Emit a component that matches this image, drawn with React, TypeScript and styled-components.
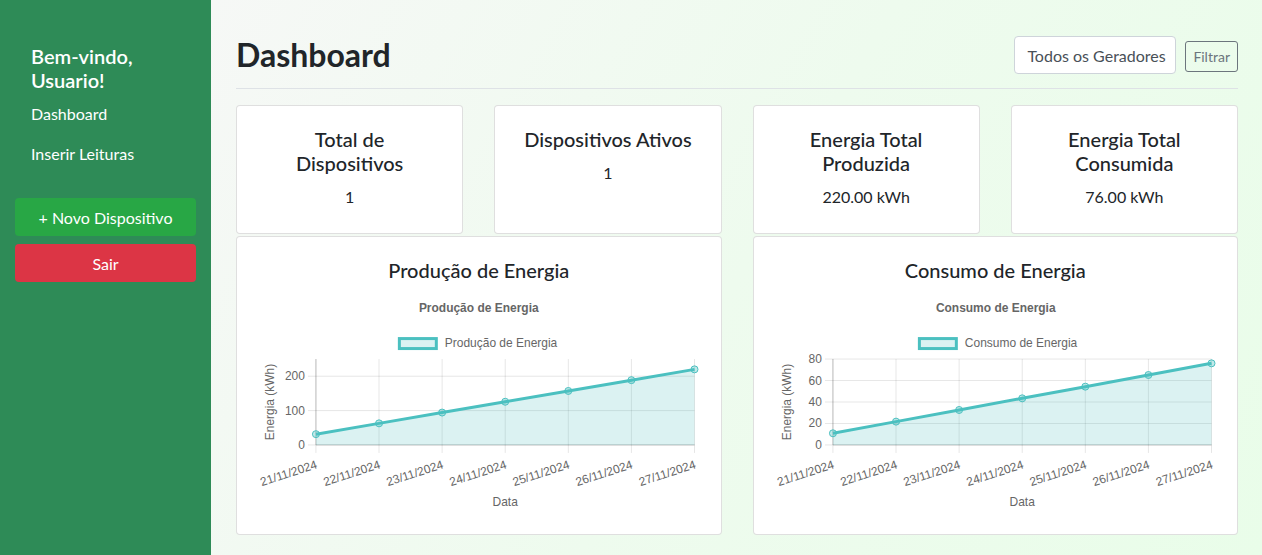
import React from "react";
import styled, { createGlobalStyle } from "styled-components";

const Global = createGlobalStyle`
  html, body { margin: 0; padding: 0; }
  body { font-family: Lato, "Noto Sans", sans-serif; color: #212529; }
  * { box-sizing: border-box; }
`;

const Layout = styled.div`
  display: flex;
  min-height: 100vh;
`;

const Sidebar = styled.aside`
  width: 211px;
  flex-shrink: 0;
  background: #2e8b57;
  padding: 44px 15px 20px;
  color: #fff;
`;

const Welcome = styled.h4`
  margin: 0 0 2px;
  padding: 0 16px;
  font-size: 20px;
  font-weight: 600;
  line-height: 24px;
`;

const Nav = styled.nav`
  display: flex;
  flex-direction: column;
  margin-bottom: 24px;
`;

const NavLink = styled.a`
  display: block;
  padding: 8px 16px;
  font-size: 16px;
  line-height: 24px;
  color: #fff;
  text-decoration: none;
`;

const SideButton = styled.button<{ $variant: "success" | "danger" }>`
  display: block;
  width: 100%;
  height: 38px;
  margin-bottom: 8px;
  border: none;
  border-radius: 4px;
  font-family: inherit;
  font-size: 16px;
  color: #fff;
  background: ${(p) => (p.$variant === "success" ? "#28a745" : "#dc3545")};
`;

const Main = styled.main`
  flex: 1;
  padding: 0 24px 20px 25px;
  background: linear-gradient(120deg, #f6f8f6 0%, #eefbee 50%, #e9fde9 100%);
`;

const Header = styled.header`
  display: flex;
  justify-content: space-between;
  align-items: center;
  padding: 36px 0 14px;
  border-bottom: 1px solid #dee2e6;
  margin-bottom: 16px;
`;

const Title = styled.h2`
  margin: 0;
  font-size: 32px;
  line-height: 38px;
  font-weight: 700;
`;

const Tools = styled.div`
  display: flex;
  align-items: center;
  gap: 9px;
`;

const Select = styled.div`
  width: 162px;
  height: 38px;
  padding: 0 12px;
  display: flex;
  align-items: center;
  background: #fff;
  border: 1px solid #ced4da;
  border-radius: 4px;
  font-size: 16px;
  color: #495057;
  white-space: nowrap;
`;

const OutlineButton = styled.button`
  height: 31px;
  padding: 0 7px;
  border: 1px solid #6c757d;
  border-radius: 3px;
  background: transparent;
  color: #6c757d;
  font-family: inherit;
  font-size: 14px;
  margin-top: 2px;
`;

const Grid = styled.div<{ $cols: number }>`
  display: grid;
  grid-template-columns: repeat(${(p) => p.$cols}, 1fr);
  column-gap: 31px;
  margin-bottom: 2px;
`;

const Card = styled.div<{ $padX: number; $padBottom: number }>`
  background: #fff;
  border: 1px solid rgba(0, 0, 0, 0.125);
  border-radius: 4px;
  padding: 21px ${(p) => p.$padX}px ${(p) => p.$padBottom}px;
  text-align: center;
`;

const CardTitle = styled.h5`
  margin: 0 0 10px;
  font-size: 20px;
  line-height: 24px;
  font-weight: 500;
`;

const CardValue = styled.p`
  margin: 0;
  font-size: 16px;
  line-height: 24px;
`;

const ChartSvg = styled.svg`
  display: block;
  width: 100%;
  height: 216px;
  margin-top: 12px;
  font-family: "Liberation Sans", Arial, sans-serif;
`;

const labels = [
  "21/11/2024",
  "22/11/2024",
  "23/11/2024",
  "24/11/2024",
  "25/11/2024",
  "26/11/2024",
  "27/11/2024",
];

type ChartProps = {
  title: string;
  values: number[];
  max: number;
  ticks: number[];
};

function LineChart({ title, values, max, ticks }: ChartProps) {
  const W = 444;
  const left = 59;
  const right = W - 6;
  const top = 65;
  const bottom = 151;
  const cx = W / 2;
  const plotCx = (left + right) / 2;
  const step = (right - left) / (labels.length - 1);
  const xs = labels.map((_, i) => left + i * step);
  const y = (v: number) => bottom - (v / max) * (bottom - top);
  const pts = values.map((v, i) => `${xs[i]},${y(v)}`).join(" ");
  const area = `${left},${bottom} ${pts} ${xs[xs.length - 1]},${bottom}`;
  const grid = "rgba(0,0,0,0.1)";
  const teal = "rgb(75,192,192)";
  const fill = "rgba(75,192,192,0.2)";
  const legendW = 40 + 7 + title.length * 6.05;
  const lx = cx - legendW / 2;
  return (
    <ChartSvg viewBox={`0 0 ${W} 216`}>
      <text x={cx} y={18} textAnchor="middle" fontSize="12" fontWeight="bold" fill="#666">
        {title}
      </text>
      <rect x={lx + 1.5} y={44.5} width={37} height={10} fill={fill} stroke={teal} strokeWidth="3" />
      <text x={lx + 47} y={53} fontSize="12" fill="#666">
        {title}
      </text>
      <text
        transform={`translate(17,108) rotate(-90)`}
        textAnchor="middle"
        fontSize="12"
        fill="#666"
      >
        Energia (kWh)
      </text>
      {xs.map((x, i) => (
        <line key={"v" + i} x1={x} x2={x} y1={top} y2={bottom + 8} stroke={grid} strokeWidth="1" />
      ))}
      {ticks.map((t) => (
        <g key={"t" + t}>
          <line x1={left - 8} x2={right} y1={y(t)} y2={y(t)} stroke={grid} strokeWidth="1" />
          <text x={left - 11} y={y(t) + 4} textAnchor="end" fontSize="12" fill="#666">
            {t}
          </text>
        </g>
      ))}
      <line x1={left} x2={left} y1={top} y2={bottom} stroke="rgba(0,0,0,0.2)" />
      <line x1={left} x2={right} y1={bottom} y2={bottom} stroke="rgba(0,0,0,0.2)" />
      <polygon points={area} fill={fill} />
      <polyline points={pts} fill="none" stroke={teal} strokeWidth="3" strokeLinejoin="round" />
      {values.map((v, i) => (
        <circle key={"p" + i} cx={xs[i]} cy={y(v)} r={3.5} fill="rgba(75,192,192,0.35)" stroke={teal} strokeWidth="1" />
      ))}
      {xs.map((x, i) => (
        <text
          key={"l" + i}
          transform={`translate(${x + 2},174) rotate(-18)`}
          textAnchor="end"
          fontSize="12"
          fill="#666"
        >
          {labels[i]}
        </text>
      ))}
      <text x={plotCx} y={212} textAnchor="middle" fontSize="12" fill="#666">
        Data
      </text>
    </ChartSvg>
  );
}

const prod = labels.map((_, i) => (220 / 7) * (i + 1));
const cons = labels.map((_, i) => (76 / 7) * (i + 1));

export default function App() {
  return (
    <>
      <Global />
      <Layout>
        <Sidebar>
          <Welcome>Bem-vindo, Usuario!</Welcome>
          <Nav>
            <NavLink href="#">Dashboard</NavLink>
            <NavLink href="#">Inserir Leituras</NavLink>
          </Nav>
          <SideButton $variant="success">+ Novo Dispositivo</SideButton>
          <SideButton $variant="danger">Sair</SideButton>
        </Sidebar>
        <Main>
          <Header>
            <Title>Dashboard</Title>
            <Tools>
              <Select>Todos os Geradores</Select>
              <OutlineButton>Filtrar</OutlineButton>
            </Tools>
          </Header>
          <Grid $cols={4}>
            <Card $padX={24} $padBottom={24}>
              <CardTitle>Total de Dispositivos</CardTitle>
              <CardValue>1</CardValue>
            </Card>
            <Card $padX={24} $padBottom={24}>
              <CardTitle>Dispositivos Ativos</CardTitle>
              <CardValue>1</CardValue>
            </Card>
            <Card $padX={24} $padBottom={24}>
              <CardTitle>Energia Total Produzida</CardTitle>
              <CardValue>220.00 kWh</CardValue>
            </Card>
            <Card $padX={24} $padBottom={24}>
              <CardTitle>Energia Total Consumida</CardTitle>
              <CardValue>76.00 kWh</CardValue>
            </Card>
          </Grid>
          <Grid $cols={2}>
            <Card $padX={20} $padBottom={24}>
              <CardTitle>Produção de Energia</CardTitle>
              <LineChart title="Produção de Energia" values={prod} max={250} ticks={[0, 100, 200]} />
            </Card>
            <Card $padX={20} $padBottom={24}>
              <CardTitle>Consumo de Energia</CardTitle>
              <LineChart title="Consumo de Energia" values={cons} max={80} ticks={[0, 20, 40, 60, 80]} />
            </Card>
          </Grid>
        </Main>
      </Layout>
    </>
  );
}
